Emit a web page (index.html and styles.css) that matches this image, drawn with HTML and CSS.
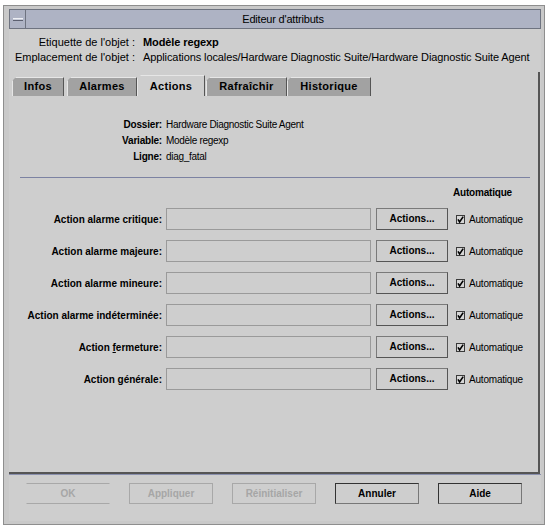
FILE: index.html
```html
<!DOCTYPE html>
<html>
<head>
<meta charset="utf-8">
<link rel="stylesheet" href="styles.css">
</head>
<body>
<div class="frame">
  <div class="titlebar">
    <div class="menubtn"><span class="dash"></span></div>
    <div class="title">Editeur d'attributs</div>
  </div>
  <div class="body">
    <div class="header">
      <div class="hl">Etiquette de l'objet :</div>
      <div class="hv strong">Modèle regexp</div>
      <div class="hl">Emplacement de l'objet :</div>
      <div class="hv">Applications locales/Hardware Diagnostic Suite/Hardware Diagnostic Suite Agent</div>
    </div>
    <div class="tabbox">
      <div class="tabs">
        <div class="tab t-infos">Infos</div>
        <div class="tab t-alarmes">Alarmes</div>
        <div class="tab t-actions selected">Actions</div>
        <div class="tab t-rafr">Rafraîchir</div>
        <div class="tab t-hist">Historique</div>
      </div>
      <div class="panel">
        <div class="info">
          <div class="il">Dossier:</div><div class="iv">Hardware Diagnostic Suite Agent</div>
          <div class="il">Variable:</div><div class="iv">Modèle regexp</div>
          <div class="il">Ligne:</div><div class="iv">diag_fatal</div>
        </div>
        <div class="sep"></div>
        <div class="autohead">Automatique</div>
        <div class="grid">
          <div class="rl">Action alarme critique:</div>
          <div class="field"></div>
          <div class="btn">Actions...</div>
          <div class="chk"><svg width="9" height="9" viewBox="0 0 9 9"><rect x="0.5" y="0.5" width="8" height="8" fill="#d6d6d6" stroke="#3a3a3a"/><path d="M2 4.3 L3.6 7 L7.2 1.6" fill="none" stroke="#000" stroke-width="1.6"/></svg><span>Automatique</span></div>

          <div class="rl">Action alarme majeure:</div>
          <div class="field"></div>
          <div class="btn">Actions...</div>
          <div class="chk"><svg width="9" height="9" viewBox="0 0 9 9"><rect x="0.5" y="0.5" width="8" height="8" fill="#d6d6d6" stroke="#3a3a3a"/><path d="M2 4.3 L3.6 7 L7.2 1.6" fill="none" stroke="#000" stroke-width="1.6"/></svg><span>Automatique</span></div>

          <div class="rl">Action alarme mineure:</div>
          <div class="field"></div>
          <div class="btn">Actions...</div>
          <div class="chk"><svg width="9" height="9" viewBox="0 0 9 9"><rect x="0.5" y="0.5" width="8" height="8" fill="#d6d6d6" stroke="#3a3a3a"/><path d="M2 4.3 L3.6 7 L7.2 1.6" fill="none" stroke="#000" stroke-width="1.6"/></svg><span>Automatique</span></div>

          <div class="rl">Action alarme indéterminée:</div>
          <div class="field"></div>
          <div class="btn">Actions...</div>
          <div class="chk"><svg width="9" height="9" viewBox="0 0 9 9"><rect x="0.5" y="0.5" width="8" height="8" fill="#d6d6d6" stroke="#3a3a3a"/><path d="M2 4.3 L3.6 7 L7.2 1.6" fill="none" stroke="#000" stroke-width="1.6"/></svg><span>Automatique</span></div>

          <div class="rl">Action <u>f</u>ermeture:</div>
          <div class="field"></div>
          <div class="btn">Actions...</div>
          <div class="chk"><svg width="9" height="9" viewBox="0 0 9 9"><rect x="0.5" y="0.5" width="8" height="8" fill="#d6d6d6" stroke="#3a3a3a"/><path d="M2 4.3 L3.6 7 L7.2 1.6" fill="none" stroke="#000" stroke-width="1.6"/></svg><span>Automatique</span></div>

          <div class="rl">Action <u>g</u>énérale:</div>
          <div class="field"></div>
          <div class="btn">Actions...</div>
          <div class="chk"><svg width="9" height="9" viewBox="0 0 9 9"><rect x="0.5" y="0.5" width="8" height="8" fill="#d6d6d6" stroke="#3a3a3a"/><path d="M2 4.3 L3.6 7 L7.2 1.6" fill="none" stroke="#000" stroke-width="1.6"/></svg><span>Automatique</span></div>
        </div>
      </div>
    </div>
    <div class="footer">
      <div class="fbtn disabled ok">OK</div>
      <div class="fbtn disabled">Appliquer</div>
      <div class="fbtn disabled">Réinitialiser</div>
      <div class="fbtn">Annuler</div>
      <div class="fbtn">Aide</div>
    </div>
  </div>
</div>
</body>
</html>
```

FILE: styles.css
```css
* { box-sizing: border-box; }
html, body { margin: 0; padding: 0; background: #ffffff; }
body {
  font-family: "Liberation Sans", Arial, sans-serif;
  font-size: 10px;
  color: #000;
}
.frame {
  margin: 5px 0 0 3px;
  width: 542px;
  height: 520px;
  border: 1px solid #8e8e8e;
  background: #c9c9c9;
  padding: 3px 3px 3px 5px;
  display: flex;
  flex-direction: column;
}
.titlebar {
  height: 20px;
  background: #aeb3c4;
  border: 1px solid #6e7380;
  display: flex;
  align-items: stretch;
}
.menubtn {
  width: 16px;
  border-right: 1px solid #6e7380;
  display: flex;
  align-items: center;
  justify-content: center;
}
.dash {
  display: block;
  width: 10px;
  height: 3px;
  background: #c8ccd8;
  border-top: 1px solid #eef0f5;
  border-bottom: 1px solid #5c6070;
}
.title {
  flex: 1;
  text-align: center;
  font-size: 11px;
  line-height: 18px;
  letter-spacing: -0.2px;
}
.body {
  flex: 1;
  background: #cecece;
  display: flex;
  flex-direction: column;
}
.header {
  display: grid;
  grid-template-columns: 126px auto;
  column-gap: 8px;
  padding-top: 6px;
  line-height: 15px;
  font-size: 11px;
  white-space: nowrap;
}
.hl { text-align: right; }
.hv { letter-spacing: -0.1px; }
.strong { font-weight: bold; }
.tabbox {
  margin-top: 7px;
  margin-right: 1px;
  height: 402px;
  border-right: 2px solid #555;
  border-bottom: 2px solid #555;
  display: flex;
  flex-direction: column;
}
.tabs {
  padding-top: 3px;
  padding-left: 3px;
  height: 24px;
  display: flex;
  align-items: flex-end;
}
.tab {
  height: 19px;
  background: #a2a2a2;
  border-top: 1px solid #e6e6e6;
  border-left: 1px solid #e6e6e6;
  border-right: 1px solid #555;
  font-weight: bold;
  font-size: 11px;
  letter-spacing: 0.3px;
  text-align: center;
  line-height: 17px;
  clip-path: polygon(4px 0, 100% 0, 100% 100%, 0 100%, 0 4px);
}
.tab.selected {
  height: 21px;
  background: #cecece;
  line-height: 20px;
}
.t-infos { width: 52px; }
.t-alarmes { width: 70px; margin-left: 3px; }
.t-actions { width: 68px; }
.t-rafr { width: 81px; margin-left: 1px; }
.t-hist { width: 84px; }
.panel {
  flex: 1;
  background: #cecece;
}
.info {
  display: grid;
  grid-template-columns: 153px auto;
  column-gap: 4px;
  padding-top: 21px;
  line-height: 16px;
}
.il { text-align: right; font-weight: bold; letter-spacing: -0.2px; }
.iv { letter-spacing: -0.3px; }
.sep {
  margin: 12px 8px 0 11px;
  height: 1px;
  background: #7c82a2;
}
.autohead {
  margin-top: 8px;
  padding-left: 444px;
  line-height: 14px;
  font-weight: bold;
  letter-spacing: -0.2px;
}
.grid {
  margin-top: 8px;
  display: grid;
  grid-template-columns: 153px 205px 73px auto;
  column-gap: 4px;
  row-gap: 10px;
  grid-auto-rows: 22px;
  align-items: center;
}
.rl {
  text-align: right;
  font-weight: bold;
  letter-spacing: 0;
  white-space: nowrap;
}
.rl u { text-decoration-thickness: 1px; text-underline-offset: 1px; }
.field {
  height: 22px;
  border: 1px solid #9a9a9a;
  background: #cecece;
}
.btn {
  margin-left: 1px;
  height: 22px;
  border: 1px solid #7a7a7a;
  border-right-color: #555;
  border-bottom-color: #555;
  font-weight: bold;
  text-align: center;
  line-height: 20px;
}
.chk {
  margin-left: 4px;
  display: flex;
  align-items: center;
  gap: 4px;
  letter-spacing: -0.2px;
}
.chk svg { display: block; }
.footer {
  flex: 1;
  border-top: 1px solid #8a90ae;
  padding: 8px 0 0 17px;
  display: flex;
  gap: 19px;
}
.fbtn {
  width: 84px;
  height: 21px;
  border: 1px solid #777;
  border-top-color: #333;
  border-left-color: #333;
  font-weight: bold;
  text-align: center;
  line-height: 19px;
}
.fbtn.disabled {
  color: #a6a6a6;
  border-color: #a8a8a8;
}
.fbtn.ok {
  border-left-color: transparent;
  border-right-color: transparent;
}
```
